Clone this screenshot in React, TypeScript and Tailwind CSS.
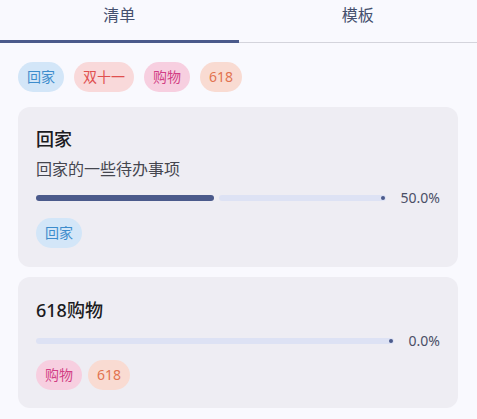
import React from "react";

const font = { fontFamily: '"Noto Sans", "Noto Sans CJK SC", sans-serif' };

type ChipKind = "home" | "double" | "shop" | "s618";

const chipCls: Record<ChipKind, string> = {
  home: "bg-[#d3e6f8] text-[#3d8ccc]",
  double: "bg-[#f9d9da] text-[#e0504f]",
  shop: "bg-[#f7cfe0] text-[#d23f85]",
  s618: "bg-[#f9dbd2] text-[#e27350]",
};

function Chip({ kind, label }: { kind: ChipKind; label: string }) {
  return (
    <div
      className={`h-[30px] px-[9px] rounded-full flex items-center text-[14px] leading-none ${chipCls[kind]}`}
    >
      {label}
    </div>
  );
}

function Progress({ value, label }: { value: number; label: string }) {
  return (
    <div className="h-[20px] flex items-center">
      <div className="flex-1 flex items-center h-[6px]">
        {value > 0 && (
          <div
            className="h-[6px] rounded-full bg-[#4b5a8b]"
            style={{ width: `${value * 100}%` }}
          />
        )}
        <div className={`flex-1 h-[6px] rounded-full bg-[#dde2f4] relative ${value > 0 ? "ml-[5px]" : ""}`}>
          <div className="absolute right-[1px] top-[1px] w-[4px] h-[4px] rounded-full bg-[#4b5a8b]" />
        </div>
      </div>
      <div className="ml-[15px] text-[14px] text-[#4a4f66] leading-none">{label}</div>
    </div>
  );
}

export default function App() {
  return (
    <div className="w-[477px] h-[419px] bg-[#f9f9fe] overflow-hidden" style={font}>
      {/* Tabs */}
      <div className="relative h-[43px] flex border-b border-[#d4d4dc]">
        <div className="flex-1 flex justify-center pt-[3px] text-[16px] text-[#45506e] leading-[24px] relative">
          清单
          <div className="absolute left-0 right-0 bottom-[-1px] h-[3px] bg-[#4b5a8b]" />
        </div>
        <div className="flex-1 flex justify-center pt-[3px] text-[16px] text-[#45506e] leading-[24px]">
          模板
        </div>
      </div>

      {/* Filter chips */}
      <div className="flex gap-[10px] px-[18px] mt-[19px]">
        <Chip kind="home" label="回家" />
        <Chip kind="double" label="双十一" />
        <Chip kind="shop" label="购物" />
        <Chip kind="s618" label="618" />
      </div>

      {/* Cards */}
      <div className="px-[18px] pr-[19px] mt-[15px] flex flex-col gap-[10px]">
        <div className="rounded-[12px] bg-[#eeedf3] px-[18px] pt-[20px] pb-[19px]">
          <div className="text-[18px] leading-[24px] text-[#1b1b21] font-medium">回家</div>
          <div className="mt-[7px] text-[16px] leading-[22px] text-[#45464f]">回家的一些待办事项</div>
          <div className="mt-[8px]">
            <Progress value={0.51} label="50.0%" />
          </div>
          <div className="mt-[10px] flex">
            <Chip kind="home" label="回家" />
          </div>
        </div>

        <div className="rounded-[12px] bg-[#eeedf3] px-[18px] pt-[21px] pb-[18px]">
          <div className="text-[18px] leading-[24px] text-[#1b1b21] font-medium">618购物</div>
          <div className="mt-[9px]">
            <Progress value={0} label="0.0%" />
          </div>
          <div className="mt-[9px] flex gap-[6px]">
            <Chip kind="shop" label="购物" />
            <Chip kind="s618" label="618" />
          </div>
        </div>
      </div>
    </div>
  );
}
